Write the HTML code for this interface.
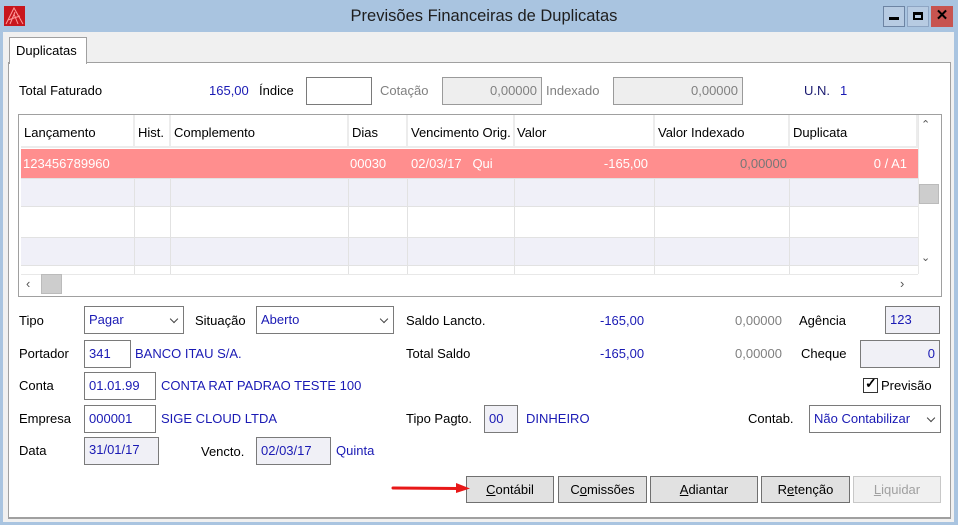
<!DOCTYPE html>
<html><head><meta charset="utf-8"><style>
*{margin:0;padding:0;box-sizing:border-box}
body{width:958px;height:525px;overflow:hidden;background:#a9c4e0;font-family:"Liberation Sans",Arial,sans-serif;font-size:13px;color:#000;position:relative}
.a{position:absolute;white-space:nowrap}
.b{color:#1a1ab4}
.g{color:#808080}
.inp{position:absolute;border:1px solid #7a7a7a;background:#fff;height:28px;padding:0 4px;line-height:26px;color:#1a1ab4;white-space:nowrap}
.ro{background:#f0f0f6}
.dis{background:#eeeeee;border-color:#9a9a9a;color:#808080;text-align:right}
.dd::after{content:"";position:absolute;right:6px;top:9px;width:5px;height:5px;border-right:1.5px solid #444;border-bottom:1.5px solid #444;transform:rotate(45deg)}
.btn{position:absolute;top:476px;height:27px;border:1px solid #707070;background:#e1e1e1;text-align:center;line-height:25px}
.col{position:absolute;top:63px;bottom:0;border-left:1px solid #e2e2e2}
.hd{position:absolute;top:0;height:33px;line-height:36px;background:#fff;border-right:2px solid #ececec;border-bottom:2px solid #ececec;padding-left:3px}
</style></head><body>
<div class="a" style="left:0;top:0;width:958px;height:32px;background:#a9c4e0"></div>
<svg class="a" style="left:4px;top:6px" width="21" height="20" viewBox="0 0 21 20"><rect width="21" height="20" fill="#c8161d"/><path d="M2 18 L10 2 L19 18 M6 18 L11 6 M14 18 L10 8 M4 14 L16 10" stroke="#ff9a9a" stroke-width="1" fill="none"/></svg>
<div class="a" style="left:0;width:958px;top:7px;text-align:center;font-size:16.5px;color:#1e1e1e;padding-left:10px">Previsões Financeiras de Duplicatas</div>
<div class="a" style="left:883px;top:6px;width:22px;height:21px;border:1px solid #6d84a3;background:#b7cbe2"><div class="a" style="left:5px;top:10px;width:10px;height:3px;background:#000"></div></div>
<div class="a" style="left:907px;top:6px;width:22px;height:21px;border:1px solid #8ea5c3;background:#b7cbe2"><div class="a" style="left:5px;top:5px;width:10px;height:8px;border:2px solid #000;border-top-width:3px"></div></div>
<div class="a" style="left:931px;top:6px;width:22px;height:21px;background:#c75450;font-weight:bold;font-size:15px;text-align:center;line-height:20px">✕</div>
<div class="a" style="left:3px;top:32px;width:951px;height:490px;background:#f0f0f0"></div>
<div class="a" style="left:8px;top:62px;width:943px;height:457px;background:#fff;border:1px solid #a0a0a0;border-bottom:2px solid #a0a0a0"></div>
<div class="a" style="left:9px;top:37px;width:78px;height:27px;background:#fff;border:1px solid #a0a0a0;border-bottom:none;padding:5px 0 0 6px">Duplicatas</div>
<div class="a" style="left:19px;top:83px">Total Faturado</div>
<div class="a b" style="left:209px;top:83px">165,00</div>
<div class="a" style="left:259px;top:83px">Índice</div>
<div class="inp" style="left:306px;top:77px;width:66px"></div>
<div class="a g" style="left:380px;top:83px">Cotação</div>
<div class="inp dis" style="left:442px;top:77px;width:100px">0,00000</div>
<div class="a g" style="left:546px;top:83px">Indexado</div>
<div class="inp dis" style="left:613px;top:77px;width:130px">0,00000</div>
<div class="a" style="left:804px;top:83px;color:#1a1a70">U.N.</div>
<div class="a b" style="left:840px;top:83px">1</div>
<div class="a" style="left:18px;top:114px;width:924px;height:183px;border:1px solid #a0a0a0;background:#fff;overflow:hidden">
 <div class="a" style="left:2px;top:0;width:897px;height:159px;overflow:hidden">
  <div class="a" style="left:0;top:34px;width:897px;height:29px;background:#ff8e8e"></div>
  <div class="a" style="left:0;top:63px;width:897px;height:29px;background:#f0f0f8;border-top:1px solid #e2e2e2;border-bottom:1px solid #e2e2e2"></div>
  <div class="a" style="left:0;top:122px;width:897px;height:29px;background:#f0f0f8;border-top:1px solid #e2e2e2;border-bottom:1px solid #e2e2e2"></div>
  <div class="col" style="left:113px"></div><div class="col" style="left:149px"></div><div class="col" style="left:327px"></div><div class="col" style="left:386px"></div><div class="col" style="left:493px"></div><div class="col" style="left:633px"></div><div class="col" style="left:768px"></div>
  <div class="hd" style="left:0;width:114px">Lançamento</div>
  <div class="hd" style="left:114px;width:36px">Hist.</div>
  <div class="hd" style="left:150px;width:178px">Complemento</div>
  <div class="hd" style="left:328px;width:59px">Dias</div>
  <div class="hd" style="left:387px;width:107px">Vencimento Orig.</div>
  <div class="hd" style="left:494px;width:140px;padding-left:2px">Valor</div>
  <div class="hd" style="left:634px;width:135px">Valor Indexado</div>
  <div class="hd" style="left:769px;width:128px">Duplicata</div>
  <div class="a" style="left:2px;top:41px;color:#fff">123456789960</div>
  <div class="a" style="left:329px;top:41px;color:#fff">00030</div>
  <div class="a" style="left:390px;top:41px;color:#fff">02/03/17&nbsp;&nbsp;&nbsp;Qui</div>
  <div class="a" style="left:560px;top:41px;width:67px;text-align:right;color:#fff">-165,00</div>
  <div class="a" style="left:700px;top:41px;width:66px;text-align:right;color:#777">0,00000</div>
  <div class="a" style="left:820px;top:41px;width:66px;text-align:right;color:#fff">0 / A1</div>
 </div>
 <div class="a" style="left:899px;top:0;width:22px;height:159px;background:#fff;border-left:1px solid #e8e8e8"></div>
 <div class="a" style="left:902px;top:3px;color:#555;font-size:11px">&#8963;</div>
 <div class="a" style="left:900px;top:69px;width:20px;height:20px;background:#cdcdcd;border:1px solid #bbb"></div>
 <div class="a" style="left:902px;top:136px;color:#555;font-size:11px">&#8964;</div>
 <div class="a" style="left:2px;top:159px;width:897px;height:20px;background:#fff;border-top:1px solid #e8e8e8"></div>
 <div class="a" style="left:7px;top:161px;color:#555">‹</div>
 <div class="a" style="left:22px;top:159px;width:21px;height:20px;background:#cdcdcd;border:1px solid #bbb"></div>
 <div class="a" style="left:881px;top:161px;color:#555">›</div>
</div>
<div class="a" style="left:19px;top:313px">Tipo</div>
<div class="inp dd" style="left:84px;top:306px;width:100px">Pagar</div>
<div class="a" style="left:195px;top:313px">Situação</div>
<div class="inp dd" style="left:256px;top:306px;width:138px">Aberto</div>
<div class="a" style="left:406px;top:313px">Saldo Lancto.</div>
<div class="a b" style="left:600px;top:313px">-165,00</div>
<div class="a g" style="left:735px;top:313px">0,00000</div>
<div class="a" style="left:799px;top:313px">Agência</div>
<div class="inp ro" style="left:885px;top:306px;width:55px">123</div>
<div class="a" style="left:19px;top:346px">Portador</div>
<div class="inp" style="left:84px;top:340px;width:47px">341</div>
<div class="a b" style="left:135px;top:346px">BANCO ITAU S/A.</div>
<div class="a" style="left:406px;top:346px">Total Saldo</div>
<div class="a b" style="left:600px;top:346px">-165,00</div>
<div class="a g" style="left:735px;top:346px">0,00000</div>
<div class="a" style="left:801px;top:346px">Cheque</div>
<div class="inp ro" style="left:860px;top:340px;width:80px;text-align:right">0</div>
<div class="a" style="left:19px;top:378px">Conta</div>
<div class="inp" style="left:84px;top:372px;width:72px">01.01.99</div>
<div class="a b" style="left:161px;top:378px">CONTA RAT PADRAO TESTE 100</div>
<div class="a" style="left:863px;top:378px;width:15px;height:15px;border:1px solid #333;background:#fff"></div>
<div class="a" style="left:865px;top:375px;font-size:14px;font-weight:bold">✓</div>
<div class="a" style="left:881px;top:378px">Previsão</div>
<div class="a" style="left:19px;top:411px">Empresa</div>
<div class="inp" style="left:84px;top:405px;width:72px">000001</div>
<div class="a b" style="left:161px;top:411px">SIGE CLOUD LTDA</div>
<div class="a" style="left:406px;top:411px">Tipo Pagto.</div>
<div class="inp ro" style="left:484px;top:405px;width:34px">00</div>
<div class="a b" style="left:526px;top:411px">DINHEIRO</div>
<div class="a" style="left:748px;top:411px">Contab.</div>
<div class="inp dd" style="left:809px;top:405px;width:132px">Não Contabilizar</div>
<div class="a" style="left:19px;top:443px">Data</div>
<div class="inp ro" style="left:84px;top:437px;width:75px;line-height:24px">31/01/17</div>
<div class="a" style="left:201px;top:444px">Vencto.</div>
<div class="inp ro" style="left:256px;top:437px;width:75px">02/03/17</div>
<div class="a b" style="left:336px;top:443px">Quinta</div>
<div class="btn" style="left:466px;width:88px"><u>C</u>ontábil</div>
<div class="btn" style="left:558px;width:89px">C<u>o</u>missões</div>
<div class="btn" style="left:650px;width:108px"><u>A</u>diantar</div>
<div class="btn" style="left:761px;width:89px">R<u>e</u>tenção</div>
<div class="btn" style="left:853px;width:88px;color:#a0a0a0;border-color:#c8c8c8;background:#f0f0f0"><u>L</u>iquidar</div>
<svg class="a" style="left:390px;top:481px" width="82" height="14"><path d="M3 7 L68 7.5" stroke="#e81818" stroke-width="3" stroke-linecap="round"/><path d="M66 2 L80 7.5 L66 12 Z" fill="#e81818"/></svg>
</body></html>
